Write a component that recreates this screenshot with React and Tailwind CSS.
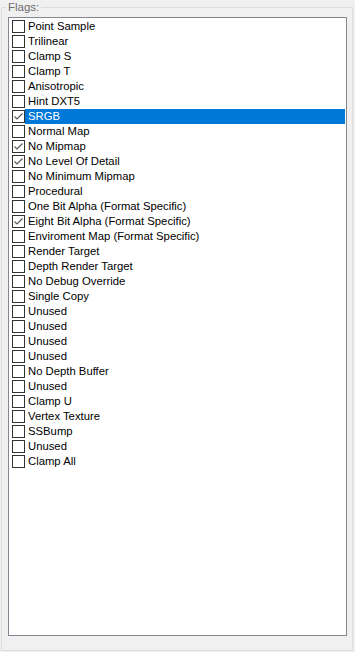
import React from 'react';

const flags = [
  ['Point Sample', false],
  ['Trilinear', false],
  ['Clamp S', false],
  ['Clamp T', false],
  ['Anisotropic', false],
  ['Hint DXT5', false],
  ['SRGB', true],
  ['Normal Map', false],
  ['No Mipmap', true],
  ['No Level Of Detail', true],
  ['No Minimum Mipmap', false],
  ['Procedural', false],
  ['One Bit Alpha (Format Specific)', false],
  ['Eight Bit Alpha (Format Specific)', true],
  ['Enviroment Map (Format Specific)', false],
  ['Render Target', false],
  ['Depth Render Target', false],
  ['No Debug Override', false],
  ['Single Copy', false],
  ['Unused', false],
  ['Unused', false],
  ['Unused', false],
  ['Unused', false],
  ['No Depth Buffer', false],
  ['Unused', false],
  ['Clamp U', false],
  ['Vertex Texture', false],
  ['SSBump', false],
  ['Unused', false],
  ['Clamp All', false],
];

const SELECTED = 6;

function CheckBox({ checked }) {
  return (
    <div className="w-[13px] h-[13px] shrink-0 border border-[#333333] bg-white flex items-center justify-center">
      {checked && (
        <svg width="11" height="11" viewBox="0 0 11 11">
          <path d="M1.5 5.5 L4 8 L9.5 2.5" fill="none" stroke="#5a5a5a" strokeWidth="1.2" />
        </svg>
      )}
    </div>
  );
}

export default function App() {
  return (
    <div
      className="w-[355px] h-[652px] bg-[#f0f0f0] pt-[7px] pl-px overflow-hidden"
      style={{ fontFamily: '"Segoe UI", "Liberation Sans", Arial, sans-serif' }}
    >
      <div className="relative w-[352px] h-[644px] border border-[#dcdcdc]">
        {/* group caption */}
        <div className="absolute -top-[7px] left-[4px] bg-[#f0f0f0] px-[2px] text-[11.5px] leading-[12px] text-[#6d6d6d]">
          Flags:
        </div>

        {/* checked list box */}
        <div className="mt-[9px] ml-[6px] w-[339px] h-[619px] border border-[#828790] bg-white pt-px">
          {flags.map(([name, checked], i) => (
            <div key={i} className="h-[15px] flex items-center">
              <div className="pl-[3px] flex items-center">
                <CheckBox checked={checked} />
              </div>
              <div
                className={
                  i === SELECTED
                    ? 'flex-1 h-[15px] bg-[#0078d7] text-white text-[11.3px] leading-[15px] pl-[3px] mr-px whitespace-nowrap'
                    : 'flex-1 h-[15px] text-black text-[11.3px] leading-[15px] pl-[3px] whitespace-nowrap'
                }
              >
                {name}
              </div>
            </div>
          ))}
        </div>
      </div>
    </div>
  );
}
